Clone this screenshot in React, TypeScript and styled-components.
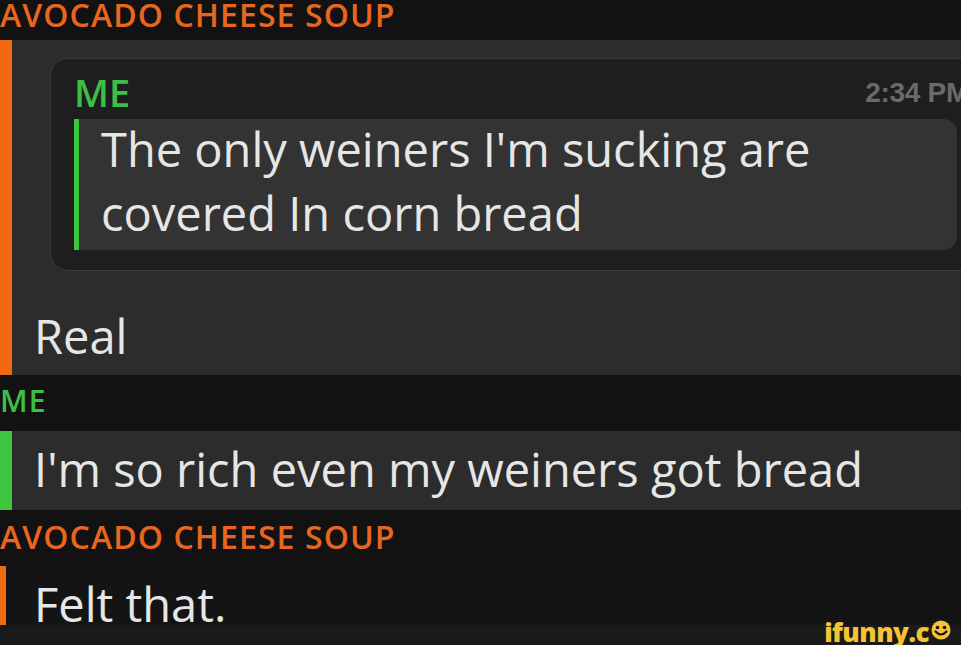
import styled, { createGlobalStyle } from "styled-components";

const GlobalStyle = createGlobalStyle`
    html, body {
        margin: 0;
        padding: 0;
        background: #121212;
        overflow: hidden;
    }
    body {
        font-family: "Open Sans", "Noto Sans", sans-serif;
    }
`;

const Page = styled.div`
    position: relative;
    width: 961px;
    height: 645px;
    display: flex;
    flex-direction: column;
    background: #121212;
    overflow: hidden;
`;

const SenderLabel = styled.div<{ $color: string; $height: number; $pad: number; $size: number }>`
    height: ${p => p.$height}px;
    margin-top: ${p => Math.min(p.$pad, 0)}px;
    padding-top: ${p => Math.max(p.$pad, 0)}px;
    margin-bottom: ${p => -Math.min(p.$pad, 0)}px;
    box-sizing: border-box;
    color: ${p => p.$color};
    font-size: ${p => p.$size}px;
    font-weight: 600;
    letter-spacing: 1.1px;
    line-height: 1;
    white-space: nowrap;
`;

const MessageRow = styled.div<{ $bg: string; $height: number }>`
    display: flex;
    flex: none;
    height: ${p => p.$height}px;
    background: ${p => p.$bg};
`;

const AccentBar = styled.div<{ $color: string; $width: number }>`
    flex: none;
    width: ${p => p.$width}px;
    background: ${p => p.$color};
`;

const MessageBody = styled.div<{ $bar?: number }>`
    flex: 1;
    min-width: 0;
    display: flex;
    flex-direction: column;
    padding-left: ${p => 34 - (p.$bar ?? 12)}px;
`;

const MessageText = styled.div<{ $pad: number }>`
    padding-top: ${p => p.$pad}px;
    color: #e6e6e6;
    font-size: 47px;
    line-height: 1;
    white-space: nowrap;
`;

const QuoteCard = styled.div`
    margin: 18px -30px 0 16px;
    height: 213px;
    box-sizing: border-box;
    border: 1.5px solid #3a3a3a;
    border-radius: 18px;
    background: #1e1e1e;
    display: flex;
    flex-direction: column;
    padding: 0 21px 0 23px;
`;

const QuoteHeader = styled.div`
    display: flex;
    justify-content: space-between;
    align-items: flex-start;
    height: 60px;
`;

const QuoteSender = styled.span`
    margin-top: 14px;
    color: #3dbf45;
    font-size: 38px;
    font-weight: 600;
    line-height: 1;
`;

const QuoteTime = styled.span`
    margin-top: 20px;
    color: #6a6a6a;
    font-family: "Liberation Sans", Arial, sans-serif;
    font-weight: bold;
    font-size: 28px;
    line-height: 1;
    letter-spacing: -0.3px;
`;

const QuoteBubble = styled.div`
    display: flex;
    height: 131px;
    margin-right: 12px;
    border-radius: 0 14px 14px 0;
    background: #333333;
`;

const QuoteText = styled.div`
    margin-top: -2px;
    padding-left: 22px;
    color: #e6e6e6;
    font-size: 47px;
    line-height: 64px;
    white-space: nowrap;
`;

const Footer = styled.div`
    flex: 1;
    background: #1a1a1a;
`;

const Watermark = styled.div`
    position: absolute;
    right: 9px;
    bottom: 0;
    display: flex;
    align-items: flex-end;
    color: #f6c332;
    font-family: "Open Sans", sans-serif;
    font-weight: 800;
    font-size: 26px;
    line-height: 1;
    letter-spacing: -0.5px;
`;

const SmileyIcon = styled.svg`
    margin: 0 0 5px 1px;
`;

const ORANGE = "#f26a10";
const ORANGE_TEXT = "#e8661f";
const GREEN = "#3ec640";
const GREEN_TEXT = "#3dbf45";

const Smiley = () => (
    <SmileyIcon width="22" height="20" viewBox="0 0 22 20">
        <circle cx="11" cy="10" r="9.5" fill="#f6c332" />
        <circle cx="7.5" cy="7.5" r="1.8" fill="#121212" />
        <circle cx="14.5" cy="7.5" r="1.8" fill="#121212" />
        <path d="M5.5 11.5 Q11 17.5 16.5 11.5" stroke="#121212" strokeWidth="2.2" fill="none" strokeLinecap="round" />
    </SmileyIcon>
);

export default function App()
{
    return (
        <Page>
            <GlobalStyle />
            <SenderLabel $color={ORANGE_TEXT} $height={40} $pad={-1} $size={32}>AVOCADO CHEESE SOUP</SenderLabel>
            <MessageRow $bg="#2c2c2c" $height={335}>
                <AccentBar $color={ORANGE} $width={12} />
                <MessageBody>
                    <QuoteCard>
                        <QuoteHeader>
                            <QuoteSender>ME</QuoteSender>
                            <QuoteTime>2:34 PM</QuoteTime>
                        </QuoteHeader>
                        <QuoteBubble>
                            <AccentBar $color={GREEN} $width={5} />
                            <QuoteText>
                                The only weiners I'm sucking are<br />
                                covered In corn bread
                            </QuoteText>
                        </QuoteBubble>
                    </QuoteCard>
                    <MessageText $pad={42}>Real</MessageText>
                </MessageBody>
            </MessageRow>
            <SenderLabel $color={GREEN_TEXT} $height={56} $pad={11} $size={30}>ME</SenderLabel>
            <MessageRow $bg="#2c2c2c" $height={79}>
                <AccentBar $color={GREEN} $width={12} />
                <MessageBody>
                    <MessageText $pad={15}>I'm so rich even my weiners got bread</MessageText>
                </MessageBody>
            </MessageRow>
            <SenderLabel $color={ORANGE_TEXT} $height={56} $pad={11} $size={32}>AVOCADO CHEESE SOUP</SenderLabel>
            <MessageRow $bg="#141414" $height={59}>
                <AccentBar $color={ORANGE} $width={6} />
                <MessageBody $bar={6}>
                    <MessageText $pad={15}>Felt that.</MessageText>
                </MessageBody>
            </MessageRow>
            <Footer />
            <Watermark>ifunny.c<Smiley /></Watermark>
        </Page>
    );
}
